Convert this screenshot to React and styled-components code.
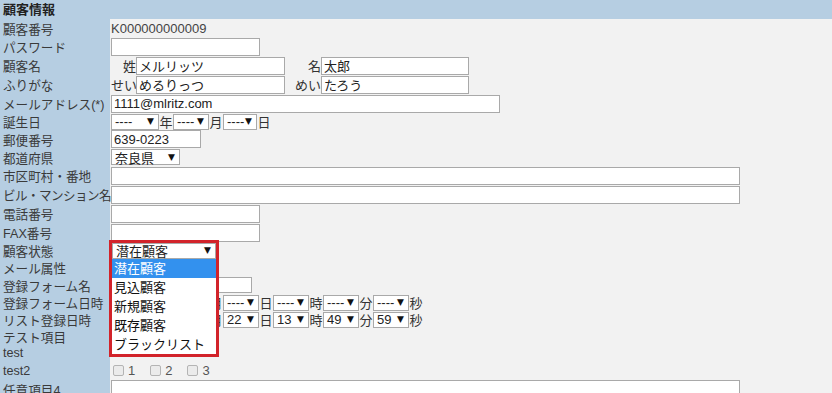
import React from 'react'
import styled, { createGlobalStyle } from 'styled-components'

const GlobalStyle = createGlobalStyle`
  html, body {
    margin: 0;
    padding: 0;
    background: #f2f2f2;
  }
  body {
    font-family: "Liberation Sans", "Noto Sans CJK JP", sans-serif;
    font-size: 13px;
    color: #333;
  }
`

const Page = styled.div`
  width: 832px;
  height: 393px;
  overflow: hidden;
  background: #f2f2f2;
`

const Header = styled.div`
  height: 19px;
  line-height: 19px;
  padding-left: 3px;
  background: #b6cee2;
  font-weight: bold;
  color: #222;
`

const Row = styled.div`
  display: flex;
  height: ${({ $h }) => $h}px;
`

const Label = styled.div`
  width: 107px;
  flex: none;
  padding-left: 3px;
  display: flex;
  align-items: center;
  background: #b6cee2;
  color: #3a3a3a;
  font-size: 12.6px;
  white-space: nowrap;
  letter-spacing: ${({ $tight }) => ($tight ? '-0.6px' : '0')};
`

const Cell = styled.div`
  flex: 1;
  display: flex;
  align-items: center;
  padding-left: 1px;
  white-space: nowrap;
`

const Value = styled.span`
  color: #444;
`

const TextInput = styled.input`
  width: ${({ $w }) => $w}px;
  height: 18px;
  box-sizing: border-box;
  margin: 0;
  padding: 0 2px;
  border: 1px solid #a9a9a9;
  background: #fff;
  font: inherit;
  color: #222;
  outline: none;
`

const Sub = styled.span`
  width: ${({ $w }) => $w}px;
  flex: none;
  text-align: right;
`

const Unit = styled.span`
  width: 14px;
  flex: none;
  text-align: center;
`

const SelectBox = styled.span`
  width: ${({ $w }) => ($w ? `${$w}px` : 'auto')};
  height: 16px;
  box-sizing: border-box;
  display: inline-flex;
  align-items: center;
  justify-content: space-between;
  padding: 0 4px 0 3px;
  border: 1px solid #a9a9a9;
  background: #fff;
  color: #222;
  flex: none;
`

const Arrow = styled.span`
  font-family: "DejaVu Sans", sans-serif;
  font-size: 9px;
  line-height: 1;
  color: #111;
`

const StatusSlot = styled.div`
  position: relative;
  width: 105px;
  height: 16px;
`

const Frame = styled.div`
  position: absolute;
  top: -3px;
  left: -2px;
  width: 104px;
  border: 3px solid #d2232a;
  background: #fff;
  z-index: 5;
`

const Option = styled.div`
  height: 19px;
  line-height: 19px;
  padding-left: 2px;
  background: ${({ $active }) => ($active ? '#3391ee' : '#fff')};
  color: ${({ $active }) => ($active ? '#fff' : '#111')};
`

const Check = styled.span`
  display: inline-flex;
  align-items: center;
  gap: 4px;
  margin: 0 13px 0 2px;
  color: #555;
`

const Box = styled.span`
  width: 9px;
  height: 9px;
  border: 1px solid #b4b4b4;
  border-radius: 2px;
  background: #ebebeb;
`

const Select = ({ w, value = '----' }) => (
  <SelectBox $w={w}>
    {value}
    <Arrow>▼</Arrow>
  </SelectBox>
)

const DateTime = ({ values }) => (
  <>
    <Select w={48} value={values[0]} />
    <Unit>年</Unit>
    <Select w={36} value={values[1]} />
    <Unit>月</Unit>
    <Select w={36} value={values[2]} />
    <Unit>日</Unit>
    <Select w={36} value={values[3]} />
    <Unit>時</Unit>
    <Select w={36} value={values[4]} />
    <Unit>分</Unit>
    <Select w={36} value={values[5]} />
    <Unit>秒</Unit>
  </>
)

const statuses = ['潜在顧客', '見込顧客', '新規顧客', '既存顧客', 'ブラックリスト']

const App = () => {
  return (
    <Page>
      <GlobalStyle />
      <Header>顧客情報</Header>
      <Row $h={18}>
        <Label>顧客番号</Label>
        <Cell><Value>K000000000009</Value></Cell>
      </Row>
      <Row $h={19}>
        <Label>パスワード</Label>
        <Cell><TextInput $w={149} type="password" readOnly /></Cell>
      </Row>
      <Row $h={19}>
        <Label>顧客名</Label>
        <Cell>
          <Sub $w={25}>姓</Sub>
          <TextInput $w={149} defaultValue="メルリッツ" />
          <Sub $w={36}>名</Sub>
          <TextInput $w={148} defaultValue="太郎" />
        </Cell>
      </Row>
      <Row $h={19}>
        <Label>ふりがな</Label>
        <Cell>
          <Sub $w={25}>せい</Sub>
          <TextInput $w={149} defaultValue="めるりっつ" />
          <Sub $w={36}>めい</Sub>
          <TextInput $w={148} defaultValue="たろう" />
        </Cell>
      </Row>
      <Row $h={19}>
        <Label>メールアドレス(*)</Label>
        <Cell><TextInput $w={389} defaultValue="1111@mlritz.com" /></Cell>
      </Row>
      <Row $h={17}>
        <Label>誕生日</Label>
        <Cell>
          <Select w={48} />
          <Unit>年</Unit>
          <Select w={36} />
          <Unit>月</Unit>
          <Select w={34} />
          <Unit>日</Unit>
        </Cell>
      </Row>
      <Row $h={18}>
        <Label>郵便番号</Label>
        <Cell><TextInput $w={90} defaultValue="639-0223" /></Cell>
      </Row>
      <Row $h={18}>
        <Label>都道府県</Label>
        <Cell><Select w={69} value="奈良県" /></Cell>
      </Row>
      <Row $h={19}>
        <Label>市区町村・番地</Label>
        <Cell><TextInput $w={629} /></Cell>
      </Row>
      <Row $h={19}>
        <Label $tight>ビル・マンション名</Label>
        <Cell><TextInput $w={629} /></Cell>
      </Row>
      <Row $h={19}>
        <Label>電話番号</Label>
        <Cell><TextInput $w={149} /></Cell>
      </Row>
      <Row $h={19}>
        <Label>FAX番号</Label>
        <Cell><TextInput $w={149} /></Cell>
      </Row>
      <Row $h={17}>
        <Label>顧客状態</Label>
        <Cell>
          <StatusSlot>
            <Frame>
              <Select w={104} value="潜在顧客" />
              {statuses.map((s, i) => (
                <Option key={s} $active={i === 0}>{s}</Option>
              ))}
            </Frame>
          </StatusSlot>
        </Cell>
      </Row>
      <Row $h={17}>
        <Label>メール属性</Label>
        <Cell />
      </Row>
      <Row $h={18}>
        <Label>登録フォーム名</Label>
        <Cell><Select w={141} value="" /></Cell>
      </Row>
      <Row $h={17}>
        <Label>登録フォーム日時</Label>
        <Cell><DateTime values={['----', '----', '----', '----', '----', '----']} /></Cell>
      </Row>
      <Row $h={17}>
        <Label>リスト登録日時</Label>
        <Cell><DateTime values={['2018', '10', '22', '13', '49', '59']} /></Cell>
      </Row>
      <Row $h={16}>
        <Label>テスト項目</Label>
        <Cell />
      </Row>
      <Row $h={18}>
        <Label>test</Label>
        <Cell />
      </Row>
      <Row $h={17}>
        <Label>test2</Label>
        <Cell>
          <Check><Box />1</Check>
          <Check><Box />2</Check>
          <Check><Box />3</Check>
        </Cell>
      </Row>
      <Row $h={20}>
        <Label>任意項目4</Label>
        <Cell><TextInput $w={629} /></Cell>
      </Row>
    </Page>
  )
}

export default App
